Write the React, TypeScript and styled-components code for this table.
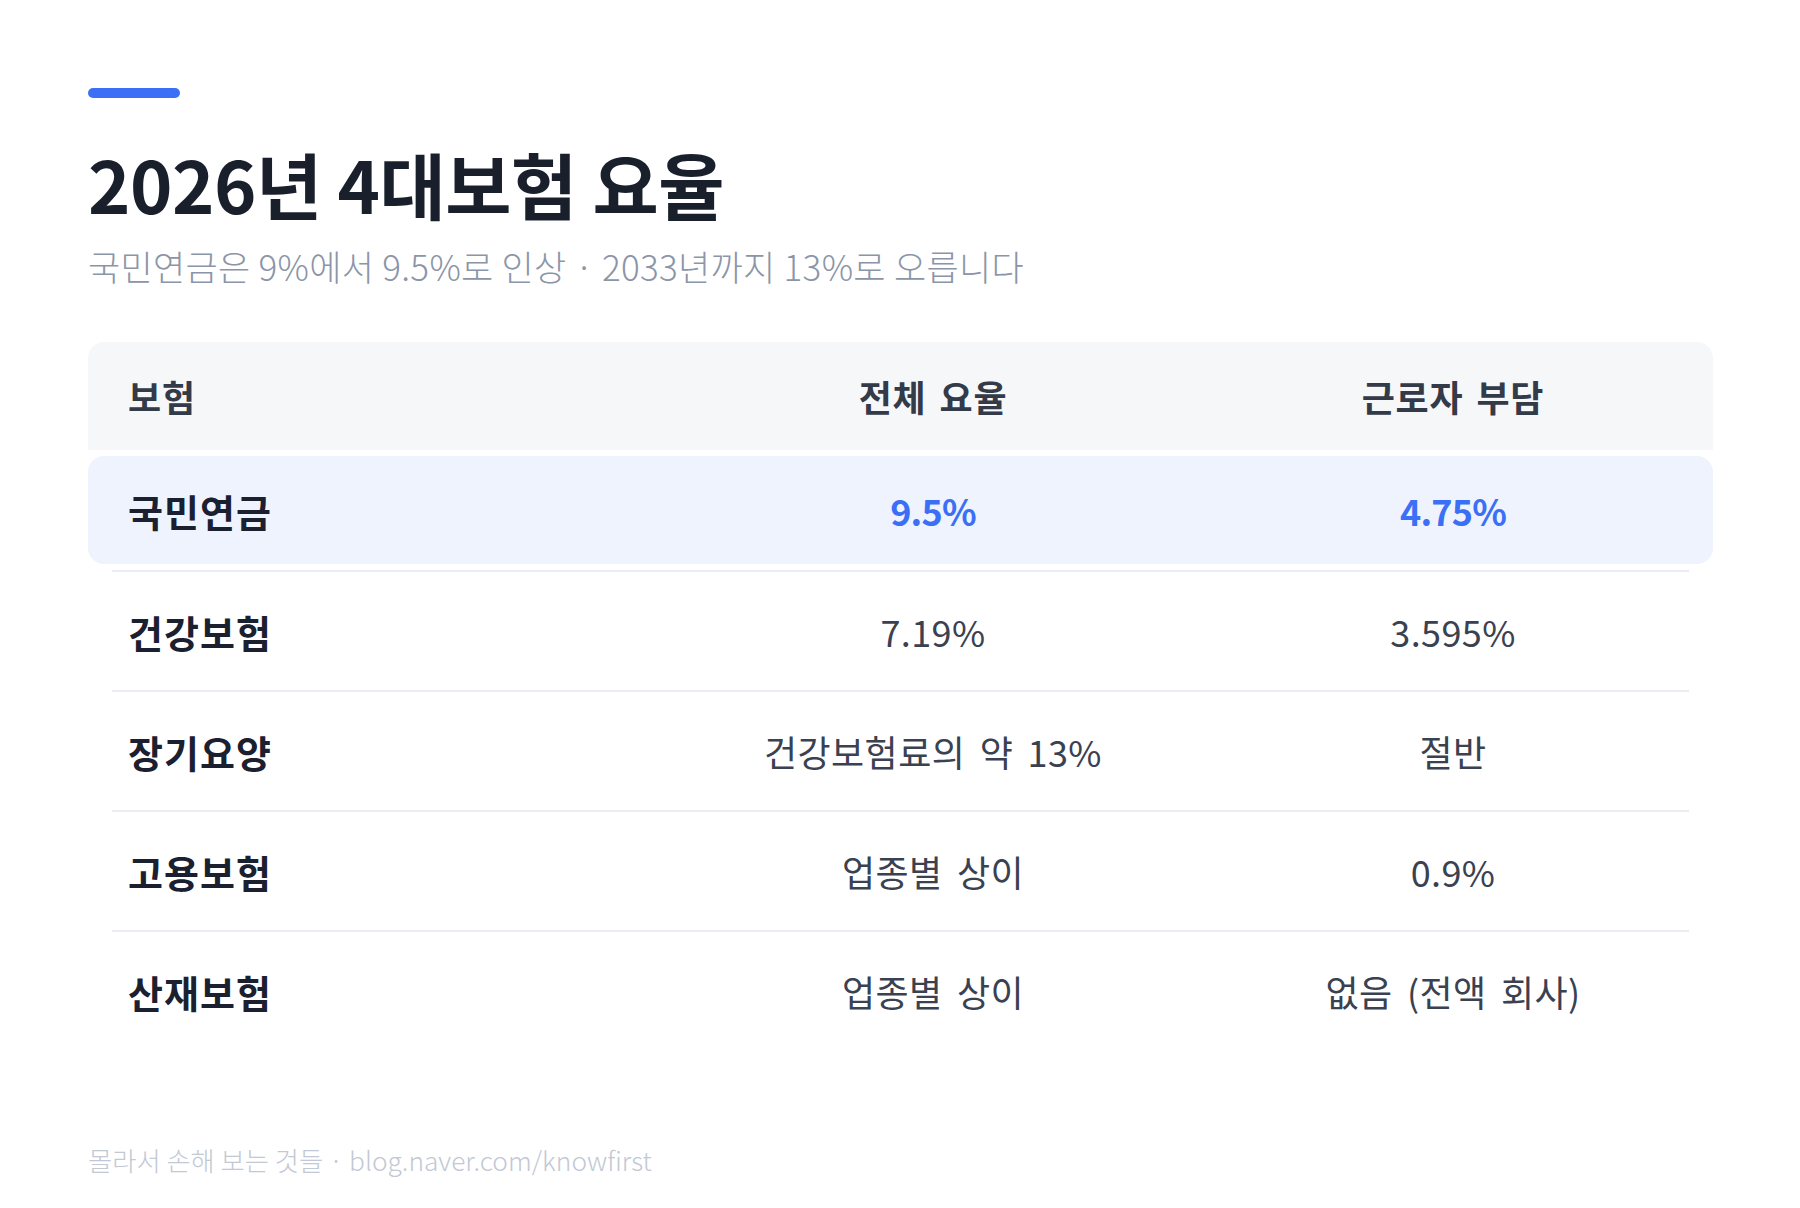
import React from "react";
import styled, { createGlobalStyle } from "styled-components";

const GlobalStyle = createGlobalStyle`
  html, body {
    margin: 0;
    padding: 0;
    background: #ffffff;
  }
  body {
    font-family: "Noto Sans CJK KR", "Noto Sans", sans-serif;
    -webkit-font-smoothing: antialiased;
  }
`;

const Page = styled.main`
  width: 1800px;
  height: 1208px;
  box-sizing: border-box;
  padding: 88px 87px 0 88px;
  display: flex;
  flex-direction: column;
  background: #ffffff;
`;

const AccentBar = styled.div`
  width: 92px;
  height: 10px;
  border-radius: 5px;
  background: #3b6ff5;
`;

const Title = styled.h1`
  margin: 42px 0 0;
  font-size: 72px;
  line-height: 1.2;
  font-weight: 700;
  color: #191f2b;
  letter-spacing: -0.5px;
`;

const Subtitle = styled.p`
  margin: 15px 0 0;
  font-size: 35px;
  line-height: 1.4;
  font-weight: 300;
  color: #8b95a8;
  letter-spacing: 0.3px;
`;

const Table = styled.section`
  margin-top: 52px;
  display: flex;
  flex-direction: column;
`;

const Grid = styled.div`
  display: grid;
  grid-template-columns: 36% 32% 32%;
  align-items: center;
`;

const HeaderRow = styled(Grid)`
  height: 108px;
  background: #f6f7f9;
  border-radius: 16px 16px 0 0;
`;

const BodyRow = styled.div`
  height: 118px;
  display: flex;
  flex-direction: column;
  justify-content: center;
`;

const HighlightRow = styled.div`
  height: 120px;
  box-sizing: border-box;
  padding: 6px 0;
  display: flex;
  flex-direction: column;
`;

const HighlightBox = styled(Grid)`
  height: 108px;
  background: #eef3fe;
  border-radius: 16px;
`;

const Divider = styled.div`
  height: 2px;
  margin: 0 24px;
  background: #e9ecf1;
`;

const HeadCell = styled.div<{ $first?: boolean }>`
  font-size: 36px;
  font-weight: 700;
  color: #333a48;
  text-align: ${(p) => (p.$first ? "left" : "center")};
  padding-left: ${(p) => (p.$first ? "40px" : "0")};
  letter-spacing: 0.8px;
  word-spacing: 4px;
`;

const LabelCell = styled.div`
  font-size: 38px;
  font-weight: 700;
  color: #1b2030;
  padding-left: 40px;
  letter-spacing: 1px;
`;

const ValueCell = styled.div<{ $accent?: boolean }>`
  font-size: 36px;
  font-weight: ${(p) => (p.$accent ? 700 : 400)};
  color: ${(p) => (p.$accent ? "#3b6ff5" : "#3a4150")};
  text-align: center;
  letter-spacing: ${(p) => (p.$accent ? "-0.8px" : "0.4px")};
  word-spacing: 6px;
`;

const Footer = styled.footer`
  margin-top: 92px;
  font-size: 26.3px;
  line-height: 1.4;
  font-weight: 300;
  color: #c2c8d4;
  letter-spacing: 0;
`;

type Row = { name: string; total: string; worker: string };

const rows: Row[] = [
  { name: "건강보험", total: "7.19%", worker: "3.595%" },
  { name: "장기요양", total: "건강보험료의 약 13%", worker: "절반" },
  { name: "고용보험", total: "업종별 상이", worker: "0.9%" },
  { name: "산재보험", total: "업종별 상이", worker: "없음 (전액 회사)" },
];

export default function App() {
  return (
    <>
      <GlobalStyle />
      <Page>
        <AccentBar />
        <Title>2026년 4대보험 요율</Title>
        <Subtitle>국민연금은 9%에서 9.5%로 인상 · 2033년까지 13%로 오릅니다</Subtitle>
        <Table>
          <HeaderRow>
            <HeadCell $first>보험</HeadCell>
            <HeadCell>전체 요율</HeadCell>
            <HeadCell>근로자 부담</HeadCell>
          </HeaderRow>
          <HighlightRow>
            <HighlightBox>
              <LabelCell>국민연금</LabelCell>
              <ValueCell $accent>9.5%</ValueCell>
              <ValueCell $accent>4.75%</ValueCell>
            </HighlightBox>
          </HighlightRow>
          {rows.map((r) => (
            <React.Fragment key={r.name}>
              <Divider />
              <BodyRow>
                <Grid>
                  <LabelCell>{r.name}</LabelCell>
                  <ValueCell>{r.total}</ValueCell>
                  <ValueCell>{r.worker}</ValueCell>
                </Grid>
              </BodyRow>
            </React.Fragment>
          ))}
        </Table>
        <Footer>몰라서 손해 보는 것들 · blog.naver.com/knowfirst</Footer>
      </Page>
    </>
  );
}
